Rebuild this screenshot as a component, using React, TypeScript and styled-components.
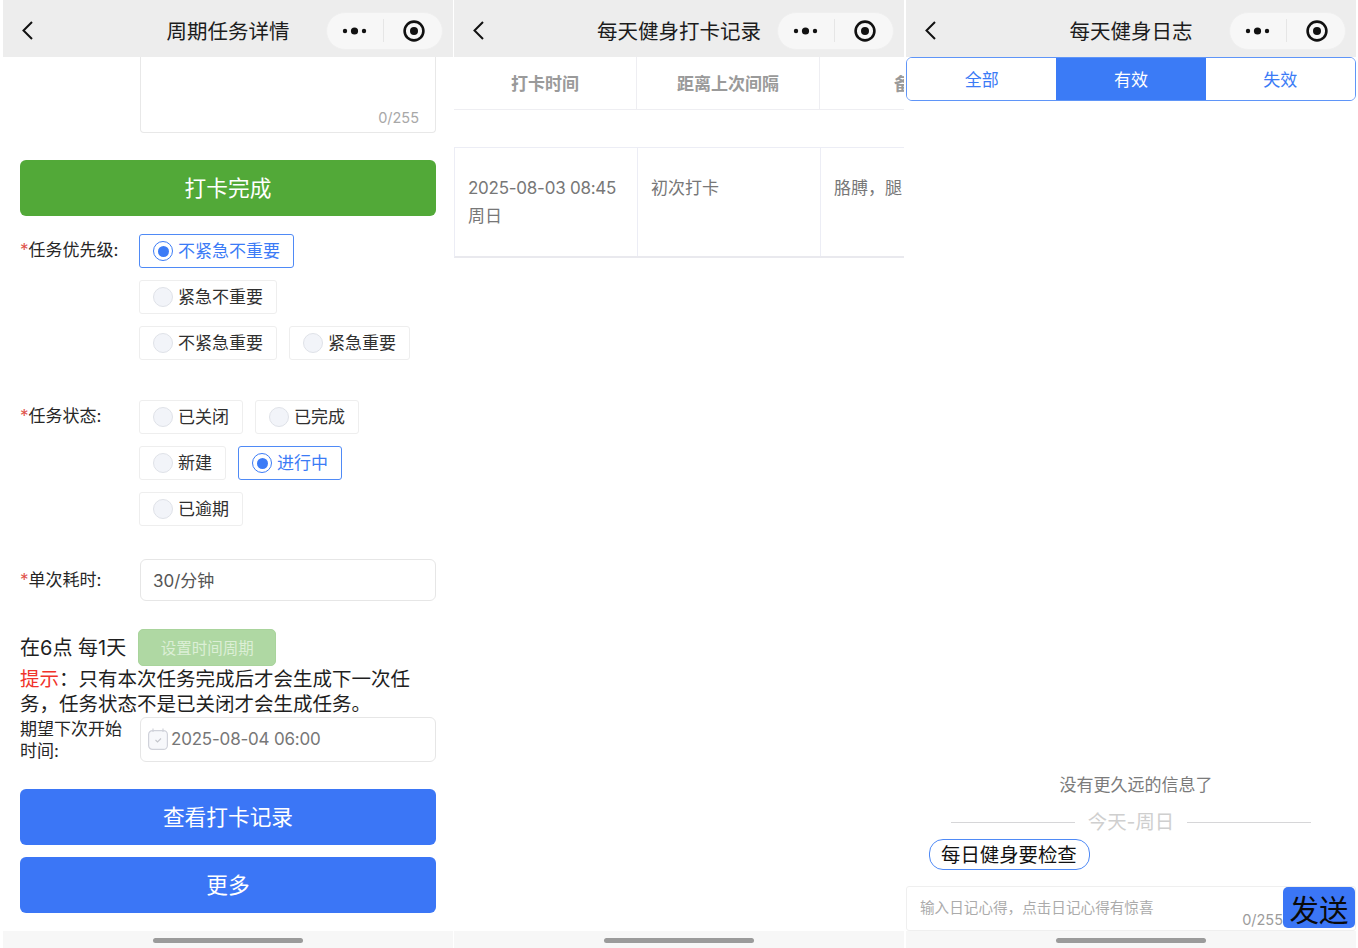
import React from "react";
import styled, { createGlobalStyle } from "styled-components";

const Global = createGlobalStyle`
  html, body { margin: 0; padding: 0; background: #fff; }
  #root { width: 1358px; height: 948px; overflow: hidden; }
  * { box-sizing: border-box; }
  body { font-family: Inter, "Noto Sans CJK SC", sans-serif; color: #222; }
`;

const Screen = styled.div`
  display: flex;
  width: 1358px;
  height: 948px;
  padding-left: 3px;
`;
const Phone = styled.section<{ $gap?: number }>`
  width: 450px;
  height: 948px;
  margin-right: ${(p) => p.$gap ?? 0}px;
  display: flex;
  flex-direction: column;
  overflow: hidden;
  flex: none;
  background: #fff;
`;
const NavBar = styled.header`
  height: 57px;
  flex: none;
  background: #ededed;
  display: flex;
  align-items: center;
  justify-content: center;
  position: relative;
`;
const Back = styled.svg`
  position: absolute;
  left: 18px;
  top: 20px;
  width: 14px;
  height: 22px;
`;
const NavTitle = styled.h1`
  margin: 0;
  font-size: 20.5px;
  font-weight: 400;
  color: #1c1c1c;
  padding-top: 2px;
`;
const Capsule = styled.div`
  position: absolute;
  left: 322.5px;
  top: 11.5px;
  width: 117px;
  height: 38px;
  border-radius: 19px;
  background: #f7f7f7;
  border: 1px solid #efefef;
  display: flex;
  align-items: center;
`;
const CapsuleDots = styled.svg`
  width: 26px;
  height: 10px;
  margin-left: 15px;
`;
const CapsuleLine = styled.span`
  width: 1px;
  height: 23px;
  background: #e6e6e6;
  margin-left: 15px;
`;
const CapsuleTarget = styled.svg`
  width: 24px;
  height: 24px;
  margin-left: 18px;
`;
const HomeBar = styled.footer`
  height: 17px;
  flex: none;
  background: #f7f7f7;
  display: flex;
  justify-content: center;
  padding-top: 7px;
`;
const HomePill = styled.span`
  width: 150px;
  height: 5px;
  border-radius: 3px;
  background: #9b9b9b;
`;
const FormBody = styled.main`
  flex: 1;
  min-height: 0;
  padding: 0 17px;
  overflow: hidden;
`;
const NoteBox = styled.div`
  margin-left: 120px;
  height: 76px;
  border: 1px solid #e8e8e8;
  border-top: none;
  border-radius: 0 0 4px 4px;
  display: flex;
  align-items: flex-end;
  justify-content: flex-end;
  padding: 0 16px 6px 0;
  font-size: 14.5px;
  color: #a8a8a8;
`;
const ActionButton = styled.button<{ $color: string; $top: number }>`
  display: block;
  width: 416px;
  height: 56px;
  margin-top: ${(p) => p.$top}px;
  border: none;
  border-radius: 6px;
  background: ${(p) => p.$color};
  color: #fff;
  font: inherit;
  font-size: 21.7px;
  padding: 0 0 3px;
`;
const FormRow = styled.div<{ $top: number; $center?: boolean }>`
  display: grid;
  grid-template-columns: 119px 297px;
  margin-top: ${(p) => p.$top}px;
  align-items: ${(p) => (p.$center ? "center" : "start")};
`;
const Label = styled.label<{ $flat?: boolean; $narrow?: boolean }>`
  font-size: 17px;
  line-height: 22px;
  padding-top: ${(p) => (p.$flat ? 0 : 5)}px;
  padding-right: ${(p) => (p.$narrow ? 12 : 0)}px;
  color: #262626;
`;
const Star = styled.span`
  color: #e0524a;
`;
const ChipWrap = styled.div`
  display: flex;
  flex-wrap: wrap;
  gap: 12px;
  max-width: 280px;
`;
const Chip = styled.div<{ $on?: boolean }>`
  height: 34px;
  display: flex;
  align-items: center;
  gap: 5px;
  padding: 0 13px;
  border: 1px solid ${(p) => (p.$on ? "#4f8af6" : "#eeeeee")};
  border-radius: 3px;
  font-size: 17px;
  color: ${(p) => (p.$on ? "#3b7bf6" : "#303030")};
`;
const ChipText = styled.span`
  padding-bottom: 3px;
`;
const Radio = styled.span<{ $on?: boolean }>`
  width: 20px;
  height: 20px;
  border-radius: 50%;
  flex: none;
  display: flex;
  align-items: center;
  justify-content: center;
  background: ${(p) => (p.$on ? "#fff" : "#f2f4f9")};
  border: ${(p) => (p.$on ? "1.5px solid #3b7bf6" : "1px solid #dfe2e8")};
  &::after {
    content: "";
    width: 11px;
    height: 11px;
    border-radius: 50%;
    background: ${(p) => (p.$on ? "#3b7bf6" : "transparent")};
  }
`;
const InputBox = styled.div<{ $height: number; $pad: number }>`
  height: ${(p) => p.$height}px;
  border: 1px solid #e6e6e6;
  border-radius: 6px;
  display: flex;
  align-items: center;
  padding-left: ${(p) => p.$pad}px;
  gap: 3px;
  font-size: 17px;
  color: #555;
  margin-left: 1px;
`;
const InputText = styled.span`
  padding-bottom: 1px;
`;
const DateText = styled.span`
  font-size: 17px;
  letter-spacing: -0.2px;
  color: #777;
  padding-bottom: 1px;
`;
const CalendarIcon = styled.svg`
  width: 20px;
  height: 22px;
  flex: none;
  margin-bottom: 2px;
`;
const CycleRow = styled.div`
  display: flex;
  align-items: center;
  gap: 12px;
  margin-top: 28px;
  height: 37px;
`;
const CycleText = styled.span`
  font-size: 20px;
  color: #1f1f1f;
  padding-bottom: 2px;
`;
const CycleButton = styled.button`
  width: 138px;
  height: 37px;
  border: 1px solid #a9d49c;
  border-radius: 5px;
  background: #afd8a3;
  color: #dcefd6;
  font: inherit;
  font-size: 15.5px;
  padding: 0 0 2px;
`;
const Tip = styled.p`
  margin: 0;
  padding-top: 1px;
  width: 400px;
  font-size: 19.5px;
  line-height: 25px;
  color: #1f1f1f;
`;
const TipMark = styled.span`
  color: #f0332b;
`;
const TableHead = styled.div`
  display: flex;
  height: 53px;
  flex: none;
  border-bottom: 1px solid #eeeef2;
`;
const HeadCell = styled.div<{ $w: number }>`
  width: ${(p) => p.$w}px;
  flex: none;
  display: flex;
  align-items: center;
  justify-content: center;
  border-right: 1px solid #eeeef2;
  font-size: 17px;
  font-weight: 700;
  color: #9a9a9a;
  padding-bottom: 1px;
`;
const TableRow = styled.div`
  display: flex;
  height: 111px;
  margin-top: 37px;
  flex: none;
  border-top: 1px solid #ecedf5;
  border-bottom: 2px solid #e9e9ee;
  border-left: 1px solid #ecedf5;
`;
const BodyCell = styled.div<{ $w: number }>`
  width: ${(p) => p.$w}px;
  flex: none;
  border-right: 1px solid #ecedf5;
  padding: 26px 13px 0;
  font-size: 17px;
  line-height: 28px;
  color: #777;
  white-space: pre-line;
`;
const TimeStamp = styled.span`
  letter-spacing: -0.25px;
`;
const Tabs = styled.div`
  display: flex;
  height: 44px;
  flex: none;
  border: 1px solid #5f95f8;
  border-radius: 6px;
  overflow: hidden;
`;
const Tab = styled.div<{ $on?: boolean }>`
  flex: 1;
  display: flex;
  align-items: center;
  justify-content: center;
  font-size: 17px;
  padding-bottom: 2px;
  background: ${(p) => (p.$on ? "#3b7bf6" : "#fff")};
  color: ${(p) => (p.$on ? "#fff" : "#3b7bf6")};
`;
const ChatArea = styled.div`
  flex: 1;
  min-height: 0;
  display: flex;
  flex-direction: column;
  justify-content: flex-end;
  padding-bottom: 16px;
`;
const NoMore = styled.div`
  text-align: center;
  font-size: 17px;
  line-height: 24px;
  color: #7b7b7b;
  padding-left: 10px;
`;
const DayDivider = styled.div`
  display: flex;
  align-items: center;
  margin: 13px 45px 0;
  gap: 13px;
  height: 24px;
  font-size: 19.4px;
  color: #cfcfcf;
  &::before,
  &::after {
    content: "";
    flex: 1;
    height: 1px;
    background: #d6d6d8;
  }
`;
const DayText = styled.span`
  padding-bottom: 3px;
`;
const Bubble = styled.div`
  align-self: flex-start;
  margin: 5px 0 0 23px;
  height: 31px;
  padding: 0 12px 3px 11px;
  display: flex;
  align-items: center;
  border: 1px solid #4f8af6;
  border-radius: 14px;
  font-size: 19.4px;
  color: #111;
`;
const Composer = styled.div`
  height: 45px;
  flex: none;
  display: flex;
  align-items: stretch;
  border: 1px solid #efefef;
  border-radius: 3px;
`;
const Placeholder = styled.span`
  flex: 1;
  padding: 9px 0 0 13px;
  font-size: 14.6px;
  color: #ababab;
`;
const Counter = styled.span`
  align-self: flex-end;
  font-size: 14.5px;
  line-height: 20px;
  color: #9c9c9c;
`;
const SendButton = styled.button`
  width: 72px;
  height: 41px;
  margin-top: 0;
  border: none;
  border-radius: 5px;
  background: #3b76f6;
  color: #0a0a0a;
  font: inherit;
  font-size: 29.5px;
  padding: 0 0 7px;
`;

const Nav = ({ title }: { title: string }) => (
  <NavBar>
    <Back viewBox="0 0 14 22" fill="none">
      <path d="M11 2 L2.5 10.5 L11 19" stroke="#111" strokeWidth="2" />
    </Back>
    <NavTitle>{title}</NavTitle>
    <Capsule>
      <CapsuleDots viewBox="0 0 26 10" fill="#111">
        <circle cx="3" cy="5" r="2.2" />
        <circle cx="12.5" cy="5" r="3.6" />
        <circle cx="22" cy="5" r="2.2" />
      </CapsuleDots>
      <CapsuleLine />
      <CapsuleTarget viewBox="0 0 24 24" fill="none">
        <circle cx="12" cy="12" r="9.4" stroke="#111" strokeWidth="2.6" />
        <circle cx="12" cy="12" r="4" fill="#111" />
      </CapsuleTarget>
    </Capsule>
  </NavBar>
);

const Home = () => (
  <HomeBar>
    <HomePill />
  </HomeBar>
);

const Option = ({ on, children }: { on?: boolean; children: React.ReactNode }) => (
  <Chip $on={on}>
    <Radio $on={on} />
    <ChipText>{children}</ChipText>
  </Chip>
);

const Required = ({ children }: { children: React.ReactNode }) => (
  <>
    <Star>*</Star>
    {children}
  </>
);

export default function App() {
  return (
    <Screen>
      <Global />
      <Phone $gap={1}>
        <Nav title="周期任务详情" />
        <FormBody>
          <NoteBox>0/255</NoteBox>
          <ActionButton $color="#52a938" $top={27}>打卡完成</ActionButton>
          <FormRow $top={18}>
            <Label><Required>任务优先级:</Required></Label>
            <ChipWrap>
              <Option on>不紧急不重要</Option>
              <Option>紧急不重要</Option>
              <Option>不紧急重要</Option>
              <Option>紧急重要</Option>
            </ChipWrap>
          </FormRow>
          <FormRow $top={40}>
            <Label><Required>任务状态:</Required></Label>
            <ChipWrap>
              <Option>已关闭</Option>
              <Option>已完成</Option>
              <Option>新建</Option>
              <Option on>进行中</Option>
              <Option>已逾期</Option>
            </ChipWrap>
          </FormRow>
          <FormRow $top={33} $center>
            <Label $flat><Required>单次耗时:</Required></Label>
            <InputBox $height={42} $pad={12}><InputText>30/分钟</InputText></InputBox>
          </FormRow>
          <CycleRow>
            <CycleText>在6点 每1天</CycleText>
            <CycleButton>设置时间周期</CycleButton>
          </CycleRow>
          <Tip>
            <TipMark>提示</TipMark>
            {"\uFF1A只有本次任务完成后才会生成下一次任务\uFF0C任务状态不是已关闭才会生成任务\u3002"}
          </Tip>
          <FormRow $top={0} $center>
            <Label $flat $narrow>期望下次开始时间:</Label>
            <InputBox $height={45} $pad={7}>
              <CalendarIcon viewBox="0 0 20 22" fill="none">
                <rect x="0.6" y="2.6" width="18.8" height="18.8" rx="4" fill="#f7f8fb" stroke="#d0d2da" strokeWidth="1.2" />
                <path d="M5 0.5V4M15 0.5V4" stroke="#d0d2da" strokeWidth="1.2" />
                <path d="M7.5 12l2 2 3.5-3.5" stroke="#c4c6cc" strokeWidth="1.1" />
              </CalendarIcon>
              <DateText>2025-08-04 06:00</DateText>
            </InputBox>
          </FormRow>
          <ActionButton $color="#3b76f6" $top={27}>查看打卡记录</ActionButton>
          <ActionButton $color="#3b76f6" $top={12}>更多</ActionButton>
        </FormBody>
        <Home />
      </Phone>

      <Phone $gap={2}>
        <Nav title="每天健身打卡记录" />
        <TableHead>
          <HeadCell $w={183}>打卡时间</HeadCell>
          <HeadCell $w={183}>距离上次间隔</HeadCell>
          <HeadCell $w={183}>备注</HeadCell>
        </TableHead>
        <TableRow>
          <BodyCell $w={183}><TimeStamp>2025-08-03 08:45</TimeStamp>{"\n周日"}</BodyCell>
          <BodyCell $w={183}>初次打卡</BodyCell>
          <BodyCell $w={183}>{"胳膊\uFF0C腿"}</BodyCell>
        </TableRow>
        <ChatArea />
        <Home />
      </Phone>

      <Phone>
        <Nav title="每天健身日志" />
        <Tabs>
          <Tab>全部</Tab>
          <Tab $on>有效</Tab>
          <Tab>失效</Tab>
        </Tabs>
        <ChatArea>
          <NoMore>没有更久远的信息了</NoMore>
          <DayDivider><DayText>今天-周日</DayText></DayDivider>
          <Bubble>每日健身要检查</Bubble>
        </ChatArea>
        <Composer>
          <Placeholder>{"输入日记心得\uFF0C点击日记心得有惊喜"}</Placeholder>
          <Counter>0/255</Counter>
          <SendButton>发送</SendButton>
        </Composer>
        <Home />
      </Phone>
    </Screen>
  );
}
